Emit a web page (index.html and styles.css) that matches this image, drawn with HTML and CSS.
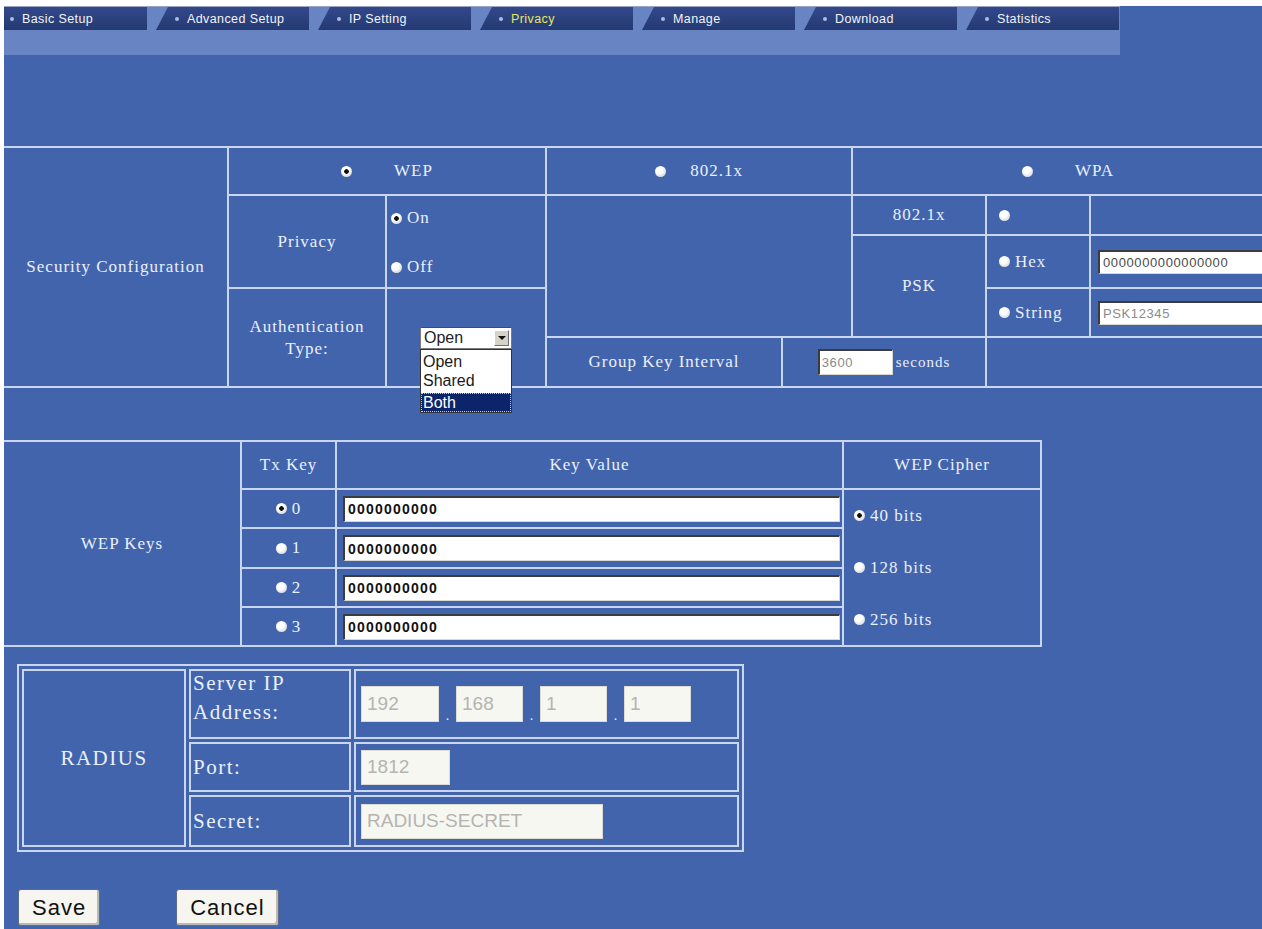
FILE: index.html
```html
<!DOCTYPE html>
<html lang="en">
<head>
  <meta charset="UTF-8" />
  <meta name="viewport" content="width=device-width, initial-scale=1" />
  <title>Privacy</title>
  <link rel="stylesheet" href="styles.css">
</head>

<body>
<div class="page">

<nav class="menu">
  <div class="tabs">
    <a class="tab">Basic Setup</a>
    <a class="tab">Advanced Setup</a>
    <a class="tab">IP Setting</a>
    <a class="tab active">Privacy</a>
    <a class="tab">Manage</a>
    <a class="tab">Download</a>
    <a class="tab">Statistics</a>
  </div>
  <div class="subbar"></div>
</nav>

<form class="privacy-form" onsubmit="return false">

  <!-- security mode: WEP / 802.1x / WPA -->
  <div class="security">
    <div class="cell sec-title">Security Configuration</div>

    <div class="cell head-wep">
      <label class="opt wide"><input class="radio" type="radio" name="mode" checked><span>WEP</span></label>
    </div>
    <div class="cell head-8021x">
      <label class="opt mid"><input class="radio" type="radio" name="mode"><span>802.1x</span></label>
    </div>
    <div class="cell head-wpa">
      <label class="opt wide"><input class="radio" type="radio" name="mode"><span>WPA</span></label>
    </div>

    <div class="cell privacy-label">Privacy</div>
    <div class="cell privacy-opts">
      <label class="opt"><input class="radio" type="radio" name="privacy" checked><span>On</span></label>
      <label class="opt"><input class="radio" type="radio" name="privacy"><span>Off</span></label>
    </div>

    <div class="cell auth-label">Authentication<br>Type:</div>
    <div class="cell auth-value">
      <div class="auth-select">
        <div class="select-box"><span>Open</span><i class="select-arrow"></i></div>
        <ul class="select-list">
          <li>Open</li>
          <li>Shared</li>
          <li class="picked">Both</li>
        </ul>
      </div>
    </div>

    <div class="cell dot1x-body"></div>

    <div class="cell wpa-dot1x">802.1x</div>
    <div class="cell wpa-dot1x-opt left">
      <input class="radio" type="radio" name="wpa">
    </div>
    <div class="cell wpa-dot1x-blank"></div>

    <div class="cell wpa-psk">PSK</div>
    <div class="cell wpa-hex left">
      <label class="opt"><input class="radio" type="radio" name="wpa"><span>Hex</span></label>
    </div>
    <div class="cell wpa-hex-value left">
      <input class="psk-input dark" type="text" value="0000000000000000">
    </div>
    <div class="cell wpa-str left">
      <label class="opt"><input class="radio" type="radio" name="wpa"><span>String</span></label>
    </div>
    <div class="cell wpa-str-value left">
      <input class="psk-input" type="text" value="PSK12345">
    </div>

    <div class="cell gki-label">Group Key Interval</div>
    <div class="cell gki-value">
      <input class="gki-input" type="text" value="3600"><span class="unit">seconds</span>
    </div>
    <div class="cell gki-blank"></div>
  </div>

  <!-- WEP keys -->
  <div class="wep-keys">
    <div class="cell keys-title">WEP Keys</div>
    <div class="cell">Tx Key</div>
    <div class="cell">Key Value</div>
    <div class="cell">WEP Cipher</div>

    <div class="cell"><label class="opt"><input class="radio" type="radio" name="tx" checked><span>0</span></label></div>
    <div class="cell left"><input class="key-input" type="text" value="0000000000"></div>
    <div class="cell cipher">
      <label class="opt"><input class="radio" type="radio" name="cipher" checked><span>40 bits</span></label>
      <label class="opt"><input class="radio" type="radio" name="cipher"><span>128 bits</span></label>
      <label class="opt"><input class="radio" type="radio" name="cipher"><span>256 bits</span></label>
    </div>

    <div class="cell"><label class="opt"><input class="radio" type="radio" name="tx"><span>1</span></label></div>
    <div class="cell left"><input class="key-input" type="text" value="0000000000"></div>

    <div class="cell"><label class="opt"><input class="radio" type="radio" name="tx"><span>2</span></label></div>
    <div class="cell left"><input class="key-input" type="text" value="0000000000"></div>

    <div class="cell"><label class="opt"><input class="radio" type="radio" name="tx"><span>3</span></label></div>
    <div class="cell left"><input class="key-input" type="text" value="0000000000"></div>
  </div>

  <!-- RADIUS server -->
  <div class="radius">
    <div class="cell radius-title">RADIUS</div>
    <div class="cell label server-label">Server IP<br>Address:</div>
    <div class="cell value">
      <input class="ip-input first" type="text" value="192"><span class="ip-dot">.</span>
      <input class="ip-input" type="text" value="168"><span class="ip-dot">.</span>
      <input class="ip-input" type="text" value="1"><span class="ip-dot">.</span>
      <input class="ip-input" type="text" value="1">
    </div>
    <div class="cell label">Port:</div>
    <div class="cell value"><input class="port-input" type="text" value="1812"></div>
    <div class="cell label">Secret:</div>
    <div class="cell value"><input class="secret-input" type="text" value="RADIUS-SECRET"></div>
  </div>

  <div class="actions">
    <button type="submit">Save</button>
    <button type="button">Cancel</button>
  </div>

</form>

</div>
</body>
</html>
```

FILE: styles.css
```css
html, body {
  margin: 0;
  padding: 0;
  overflow: hidden;
}

body {
  background: #fff;
  font-family: "Liberation Serif", "Times New Roman", serif;
  color: #eaf0fa;
}

.page {
  margin: 6px 0 0 4px;
  height: 923px;
  background: #4264ad;
  overflow: hidden;
}

/* top menu */
.menu {
  width: 1116px;
  background: #6984c2;
}

.tabs {
  display: flex;
  gap: 9px;
  height: 23px;
  border-top: 1px solid #98a4c0;
}

.tab {
  width: 153px;
  box-sizing: border-box;
  display: flex;
  align-items: center;
  padding-left: 19px;
  background: linear-gradient(#33488a, #243a73);
  clip-path: polygon(12px 0, 100% 0, 100% 100%, 0 100%);
  font: 12.5px "Liberation Sans", Arial, sans-serif;
  letter-spacing: 0.4px;
  color: #f2f4fa;
  text-decoration: none;
  cursor: pointer;
}

.tab::before {
  content: "";
  width: 4px;
  height: 4px;
  border-radius: 50%;
  background: #aabce2;
  margin-right: 8px;
}

.tab:first-child {
  width: 143px;
  padding-left: 6px;
  clip-path: none;
}

.tab.active {
  color: #e6e85e;
}

.subbar {
  height: 25px;
}

/* shared table cells */
.cell {
  background: #4264ad;
  display: flex;
  align-items: center;
  justify-content: center;
  text-align: center;
  font-size: 17px;
  letter-spacing: 1px;
}

.cell.left {
  justify-content: flex-start;
}

.opt {
  display: inline-flex;
  align-items: center;
  gap: 5px;
  cursor: pointer;
}

.opt.wide {
  gap: 42px;
}

.opt.mid {
  gap: 24px;
}

.radio {
  appearance: none;
  -webkit-appearance: none;
  flex: none;
  width: 11px;
  height: 11px;
  margin: 0;
  border-radius: 50%;
  background: radial-gradient(circle at 40% 35%, #fff 0 35%, #c2c4c8 100%);
  cursor: pointer;
}

.radio:checked {
  background:
    radial-gradient(circle, #111 0 2px, transparent 2.6px),
    radial-gradient(circle at 40% 35%, #fff 0 35%, #c2c4c8 100%);
}

/* security configuration block */
.security {
  display: grid;
  grid-template-columns: 223px 156px 158px 234px 68px 132px 102px 192px;
  grid-template-rows: 46px 38px 51px 47px 48px;
  gap: 2px;
  padding: 2px 0;
  margin-top: 91px;
  width: max-content;
  background: #c9d6ee;
}

.sec-title      { grid-column: 1; grid-row: 1 / 6; }
.head-wep       { grid-column: 2 / 4; grid-row: 1; }
.head-8021x     { grid-column: 4 / 6; grid-row: 1; }
.head-wpa       { grid-column: 6 / 9; grid-row: 1; }
.privacy-label  { grid-column: 2; grid-row: 2 / 4; }
.privacy-opts   { grid-column: 3; grid-row: 2 / 4; }
.auth-label     { grid-column: 2; grid-row: 4 / 6; line-height: 22px; }
.auth-value     { grid-column: 3; grid-row: 4 / 6; }
.dot1x-body     { grid-column: 4 / 6; grid-row: 2 / 5; }
.wpa-dot1x      { grid-column: 6; grid-row: 2; }
.wpa-dot1x-opt  { grid-column: 7; grid-row: 2; }
.wpa-dot1x-blank { grid-column: 8; grid-row: 2; }
.wpa-psk        { grid-column: 6; grid-row: 3 / 5; }
.wpa-hex        { grid-column: 7; grid-row: 3; }
.wpa-hex-value  { grid-column: 8; grid-row: 3; }
.wpa-str        { grid-column: 7; grid-row: 4; }
.wpa-str-value  { grid-column: 8; grid-row: 4; }
.gki-label      { grid-column: 4; grid-row: 5; }
.gki-value      { grid-column: 5 / 7; grid-row: 5; gap: 3px; }
.gki-blank      { grid-column: 7 / 9; grid-row: 5; }

.privacy-opts {
  flex-direction: column;
  align-items: flex-start;
  justify-content: space-between;
  padding: 12px 0 10px 4px;
}

.wpa-dot1x-opt, .wpa-hex, .wpa-str {
  padding-left: 12px;
}

.psk-input, .gki-input, .key-input {
  box-sizing: border-box;
  background: #fff;
  border-top: 2px solid #3c3c3c;
  border-left: 2px solid #3c3c3c;
  border-right: 1px solid #d8d8d0;
  border-bottom: 1px solid #d8d8d0;
  outline: none;
  font-family: "Liberation Sans", Arial, sans-serif;
}

.psk-input {
  margin-left: 7px;
  width: 230px;
  height: 24px;
  padding: 0 3px;
  font-size: 13px;
  letter-spacing: 0.6px;
  color: #8a8a8a;
}

.psk-input.dark {
  color: #4a4a4a;
}

.gki-input {
  width: 75px;
  height: 26px;
  padding: 0 2px;
  font-size: 13px;
  color: #8a8a8a;
  letter-spacing: 0.6px;
}

.unit {
  font-size: 15px;
}

/* authentication drop-down, shown opened */
.auth-select {
  position: relative;
  width: 92px;
  font-family: "Liberation Sans", Arial, sans-serif;
  letter-spacing: 0;
  text-align: left;
}

.select-box {
  display: flex;
  align-items: center;
  justify-content: space-between;
  height: 22px;
  box-sizing: border-box;
  padding: 0 2px 0 3px;
  background: #fff;
  border: 1px solid #7b7b7b;
  border-top-color: #4a4a4a;
  font-size: 16px;
  color: #222;
}

.select-arrow {
  position: relative;
  width: 15px;
  height: 16px;
  box-sizing: border-box;
  background: #d6d3cb;
  border: 1px solid;
  border-color: #fff #6e6e6e #6e6e6e #fff;
}

.select-arrow::after {
  content: "";
  position: absolute;
  left: 3px;
  top: 5px;
  border-left: 4px solid transparent;
  border-right: 4px solid transparent;
  border-top: 4px solid #111;
}

.select-list {
  position: absolute;
  top: 22px;
  left: 0;
  z-index: 2;
  width: 92px;
  box-sizing: border-box;
  margin: 0;
  padding: 2px 0 0;
  list-style: none;
  background: #fff;
  border: 1px solid #333;
  font-size: 16px;
  line-height: 19px;
  color: #1a1a1a;
}

.select-list li {
  padding: 0 2px;
}

.select-list li.picked {
  margin-top: 3px;
  background: #0c246a;
  color: #fff;
  outline: 1px dotted #ccc;
  outline-offset: -1px;
}

/* WEP keys block */
.wep-keys {
  display: grid;
  grid-template-columns: 236px 93px 505px 196px;
  grid-template-rows: 46px 37px 38px 37px 37px;
  gap: 2px;
  padding: 2px 2px 2px 0;
  margin-top: 52px;
  width: max-content;
  background: #c9d6ee;
}

.keys-title { grid-column: 1; grid-row: 1 / 6; }

.cipher {
  grid-column: 4;
  grid-row: 2 / 6;
  flex-direction: column;
  align-items: flex-start;
  gap: 32px;
  padding-left: 10px;
}

.key-input {
  margin-left: 6px;
  width: 497px;
  height: 26px;
  padding: 0 3px;
  font-size: 14px;
  font-weight: bold;
  letter-spacing: 1.2px;
  color: #111;
}

/* RADIUS block */
.radius {
  display: grid;
  grid-template-columns: 164px 162px 385px;
  grid-template-rows: 70px 50px 52px;
  gap: 3px;
  padding: 3px;
  margin: 17px 0 0 13px;
  width: max-content;
  border: 2px solid #c9d6ee;
}

.radius .cell {
  box-sizing: border-box;
  border: 2px solid #c9d6ee;
  font-size: 21px;
  letter-spacing: 1.5px;
}

.radius-title {
  grid-column: 1;
  grid-row: 1 / 4;
}

.radius .label {
  justify-content: flex-start;
  text-align: left;
  padding-left: 2px;
  line-height: 29px;
}

.radius .server-label {
  padding-bottom: 12px;
}

.radius .value {
  justify-content: flex-start;
  padding-left: 5px;
}

.ip-input, .port-input, .secret-input {
  box-sizing: border-box;
  height: 36px;
  padding: 0 5px;
  background: #f7f7f2;
  border: 1px solid #dcdcd4;
  outline: none;
  font: 19px "Liberation Sans", Arial, sans-serif;
  color: #b4b4b0;
}

.ip-input {
  width: 67px;
}

.ip-input.first {
  width: 78px;
}

.ip-dot {
  width: 17px;
  align-self: flex-end;
  margin-bottom: 16px;
  font-size: 14px;
  letter-spacing: 0;
  text-align: center;
  line-height: 10px;
}

.port-input {
  width: 89px;
  height: 35px;
}

.secret-input {
  width: 242px;
  height: 35px;
}

/* form buttons */
.actions {
  display: flex;
  gap: 76px;
  margin: 37px 0 0 14px;
}

.actions button {
  height: 37px;
  padding: 0 13px;
  background: #f6f5ef;
  border: 1px solid #5d6a8c;
  border-radius: 3px;
  box-shadow: inset -2px -2px 0 #bcbab0;
  font: 22px "Liberation Sans", Arial, sans-serif;
  letter-spacing: 1px;
  color: #111;
  cursor: pointer;
}
```
